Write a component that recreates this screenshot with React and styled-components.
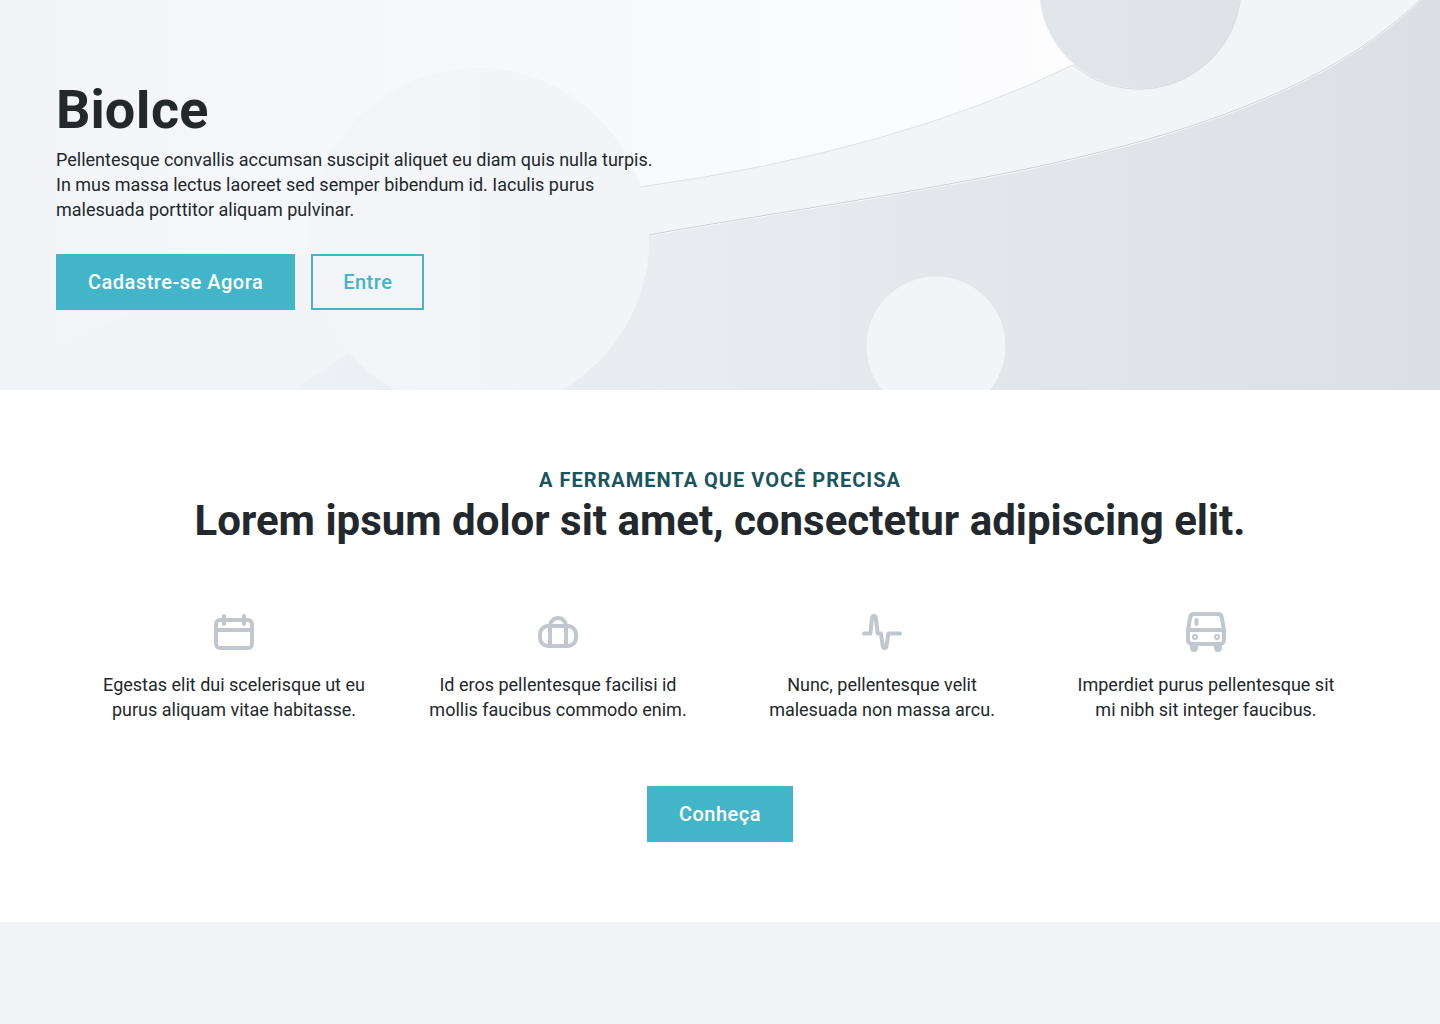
import React from "react";
import styled, { createGlobalStyle } from "styled-components";

const colors = {
  ink: "#22282b",
  accent: "#43b5c8",
  accentDark: "#1a545d",
  muted: "#c1c7ce",
  surface: "#f2f4f8",
};

const GlobalStyle = createGlobalStyle`
  *, *::before, *::after { box-sizing: border-box; }
  body {
    margin: 0;
    background: ${colors.surface};
    color: ${colors.ink};
    font-family: Roboto, "Liberation Sans", sans-serif;
    font-size: 18px;
    line-height: 25px;
  }
  h1, h2, p, ul { margin: 0; padding: 0; }
`;

const Hero = styled.header`
  position: relative;
  overflow: hidden;
  padding: 80px 56px;
  background: ${colors.surface};
`;

const Backdrop = styled.svg`
  position: absolute;
  inset: 0;
  width: 100%;
  height: 100%;
`;

const HeroContent = styled.div`
  position: relative;
  display: flex;
  flex-direction: column;
  align-items: flex-start;
`;

const Title = styled.h1`
  font-size: 54px;
  line-height: 59px;
  font-weight: 700;
`;

const Lead = styled.p`
  max-width: 600px;
  margin-top: 8px;
`;

const Actions = styled.div`
  display: flex;
  flex-wrap: wrap;
  gap: 16px;
  margin-top: 32px;
`;

const Button = styled.button`
  height: 56px;
  padding: 0 30px;
  border: 2px solid ${colors.accent};
  border-radius: 0;
  background: ${(p) => (p.$outline ? "transparent" : colors.accent)};
  color: ${(p) => (p.$outline ? colors.accent : "#ffffff")};
  font-family: inherit;
  font-size: 20px;
  line-height: 24px;
  font-weight: 500;
  letter-spacing: 0.025em;
  cursor: pointer;
`;

const Features = styled.section`
  display: flex;
  flex-direction: column;
  align-items: center;
  padding: 80px 56px;
  background: #ffffff;
  text-align: center;
`;

const Eyebrow = styled.p`
  color: ${colors.accentDark};
  font-size: 20px;
  line-height: 20px;
  font-weight: 700;
  letter-spacing: 0.05em;
  text-transform: uppercase;
`;

const Heading = styled.h2`
  margin-top: 8px;
  font-size: 42px;
  line-height: 46px;
  font-weight: 700;
`;

const FeatureList = styled.ul`
  display: grid;
  grid-template-columns: repeat(4, 1fr);
  gap: 48px;
  width: 100%;
  margin: 64px 0;
  padding: 0 40px;
  list-style: none;
`;

const Feature = styled.li`
  display: flex;
  flex-direction: column;
  align-items: center;
  gap: 16px;
`;

const Icon = styled.svg`
  width: 48px;
  height: 48px;
  fill: none;
  stroke: ${colors.muted};
  stroke-width: 4;
  stroke-linecap: round;
  stroke-linejoin: round;
`;

const Detail = styled.g`
  stroke-width: 2;
`;

const CalendarIcon = () => (
  <Icon viewBox="0 0 48 48" aria-hidden="true">
    <rect x="6" y="12" width="36" height="28" rx="4" />
    <path d="M14 8v8M34 8v8M6 22h36" />
  </Icon>
);

const BagIcon = () => (
  <Icon viewBox="0 0 48 48" aria-hidden="true">
    <rect x="6" y="18" width="36" height="20" rx="8" />
    <path d="M16 38V18a8 8 0 0 1 16 0v20" />
  </Icon>
);

const PulseIcon = () => (
  <Icon viewBox="0 0 48 48" aria-hidden="true">
    <path d="M6 25.5h6.4L14 10.2c.4-3 3.4-3 3.8 0l1.9 15.3h3.2l1.9 12.7c.5 2.600 3.200 2.600 3.700 0l1.900-12.700H42" />
  </Icon>
);

const BusIcon = () => (
  <Icon viewBox="0 0 48 48" aria-hidden="true">
    <path d="M6 22 8.2 9.4A4 4 0 0 1 12.1 6h23.8a4 4 0 0 1 3.9 3.400L42 22v10a4 4 0 0 1-4 4H10a4 4 0 0 1-4-4zM6 22h36M14.500 12v4" />
    <path d="M8 36h8v4a4 4 0 0 1-8 0zM32 36h8v4a4 4 0 0 1-8 0z" fill={colors.muted} stroke="none" />
    <Detail>
      <circle cx="13" cy="29" r="2" />
      <circle cx="35" cy="29" r="2" />
    </Detail>
  </Icon>
);

const HeroBackdrop = () => (
  <Backdrop viewBox="0 0 1440 390" preserveAspectRatio="xMidYMid slice" aria-hidden="true">
    <defs>
      <linearGradient id="sky" gradientUnits="userSpaceOnUse" x1="0" y1="0" x2="1100" y2="0">
        <stop offset="0" stopColor="#f2f4f8" />
        <stop offset="0.4" stopColor="#f6f8fb" />
        <stop offset="0.75" stopColor="#fafbfd" />
        <stop offset="1" stopColor="#fdfdfe" />
      </linearGradient>
      <linearGradient id="slope" gradientUnits="userSpaceOnUse" x1="295" y1="0" x2="1440" y2="0">
        <stop offset="0" stopColor="#edf0f4" />
        <stop offset="0.35" stopColor="#e8ebef" />
        <stop offset="0.7" stopColor="#e1e4e8" />
        <stop offset="1" stopColor="#dcdfe3" />
      </linearGradient>
      <linearGradient id="orb" gradientUnits="userSpaceOnUse" x1="307" y1="0" x2="649" y2="0">
        <stop offset="0" stopColor="#f3f5f8" />
        <stop offset="1" stopColor="#f2f4f8" />
      </linearGradient>
    </defs>
    <path d="M0 0H1180L1073 65Q894 152 640 187C420 215 190 270 59 350L0 390z" fill="url(#sky)" />
    <path d="M1073 65Q894 152 640 187" fill="none" stroke="#dfe1e5" strokeWidth="1" />
    <path d="M295 390C420 300 520 258 649 235C730 220 850 203 960 182C1180 142 1330 88 1420 0H1440V390z" fill="url(#slope)" />
    <path d="M649 235C730 220 850 203 960 182C1180 142 1330 88 1420 0" fill="none" stroke="#cbd0d5" strokeWidth="1" />
    <path d="M649 236C730 221 850 204 960 183C1180 143 1330 89 1421 0" fill="none" stroke="#f5f6f9" strokeWidth="1" />
    <ellipse cx="478" cy="240" rx="171" ry="172" fill="url(#orb)" />
    <circle cx="936" cy="346" r="69.5" fill={colors.surface} />
    <circle cx="1140" cy="-12" r="101" fill="url(#slope)" stroke="#f5f6f9" />
    <path d="M1073 65A102 102 0 0 0 1241 -12" fill="none" stroke="#cbd0d5" strokeWidth="1" strokeOpacity="0.7" />
  </Backdrop>
);

const features = [
  { icon: CalendarIcon, text: "Egestas elit dui scelerisque ut eu purus aliquam vitae habitasse." },
  { icon: BagIcon, text: "Id eros pellentesque facilisi id mollis faucibus commodo enim." },
  { icon: PulseIcon, text: "Nunc, pellentesque velit malesuada non massa arcu." },
  { icon: BusIcon, text: "Imperdiet purus pellentesque sit mi nibh sit integer faucibus." },
];

export default function App() {
  return (
    <>
      <GlobalStyle />
      <Hero>
        <HeroBackdrop />
        <HeroContent>
          <Title>BioIce</Title>
          <Lead>
            Pellentesque convallis accumsan suscipit aliquet eu diam quis nulla turpis. In mus massa
            lectus laoreet sed semper bibendum id. Iaculis purus malesuada porttitor aliquam pulvinar.
          </Lead>
          <Actions>
            <Button type="button">Cadastre-se Agora</Button>
            <Button type="button" $outline>Entre</Button>
          </Actions>
        </HeroContent>
      </Hero>
      <main>
        <Features>
          <Eyebrow>A ferramenta que você precisa</Eyebrow>
          <Heading>Lorem ipsum dolor sit amet, consectetur adipiscing elit.</Heading>
          <FeatureList>
            {features.map(({ icon: FeatureIcon, text }) => (
              <Feature key={text}>
                <FeatureIcon />
                <p>{text}</p>
              </Feature>
            ))}
          </FeatureList>
          <Button type="button">Conheça</Button>
        </Features>
      </main>
    </>
  );
}
